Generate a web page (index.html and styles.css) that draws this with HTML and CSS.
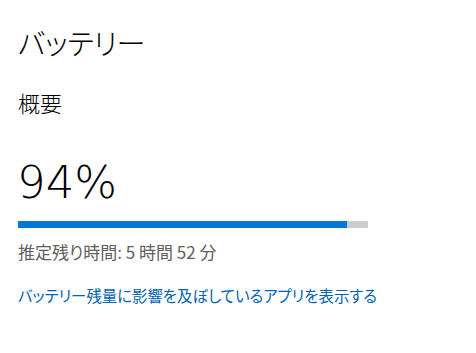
FILE: index.html
```html
<!DOCTYPE html>
<html lang="ja">
<head>
<meta charset="utf-8">
<link rel="stylesheet" href="styles.css">
</head>
<body>
<div class="page">
  <h1 class="title">バッテリー</h1>
  <h2 class="subtitle">概要</h2>
  <div class="percent">94%</div>
  <div class="bar"><div class="bar-fill" style="width: 94%"></div></div>
  <div class="remaining">推定残り時間: 5 時間 52 分</div>
  <a class="link" href="#">バッテリー残量に影響を及ぼしているアプリを表示する</a>
</div>
</body>
</html>
```

FILE: styles.css
```css
html, body {
  margin: 0;
  padding: 0;
  background: #ffffff;
}
body {
  font-family: "Noto Sans CJK JP", "Noto Sans", sans-serif;
  font-feature-settings: "palt";
  color: #000000;
}
.page {
  padding: 20px 0 0 18px;
  display: flex;
  flex-direction: column;
  align-items: flex-start;
}
.title {
  margin: 0;
  font-size: 29px;
  font-weight: 300;
  line-height: 44px;
  letter-spacing: -0.4px;
}
.subtitle {
  margin: 23px 0 0 0;
  font-size: 22px;
  font-weight: 300;
  line-height: 30px;
}
.percent {
  margin: 41px 0 0 -1px;
  font-family: "DejaVu Sans", "Noto Sans", sans-serif;
  font-size: 45px;
  font-weight: 200;
  line-height: 50px;
}
.bar {
  margin-top: 13px;
  width: 350px;
  height: 7px;
  background: #cccccc;
}
.bar-fill {
  height: 100%;
  background: #0078d7;
}
.remaining {
  margin-top: 12px;
  font-size: 17px;
  line-height: 24px;
  color: #5f5f5f;
}
.link {
  margin-top: 20px;
  font-size: 15.4px;
  line-height: 22px;
  color: #0063b1;
  text-decoration: none;
}
```
